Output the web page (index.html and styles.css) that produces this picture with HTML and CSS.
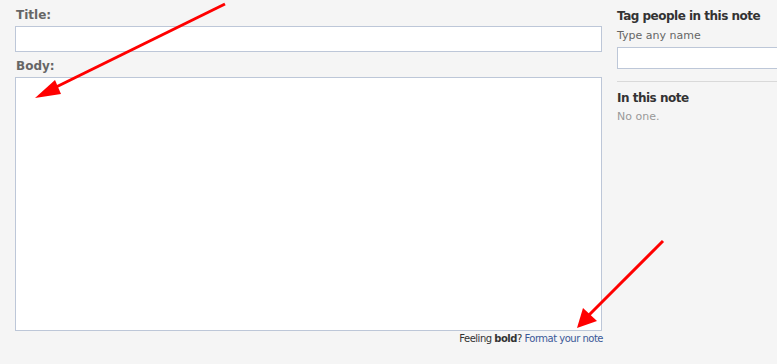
FILE: index.html
```html
<!DOCTYPE html>
<html lang="en">
<head>
    <meta charset="UTF-8">
    <title>Write a Note</title>
    <link rel="stylesheet" href="styles.css">
</head>
<body>
    <div class="page">
        <form class="note-form">
            <label class="field-label" for="title">Title:</label>
            <input type="text" id="title" class="title-input">

            <label class="field-label" for="body">Body:</label>
            <textarea id="body" class="body-input"></textarea>

            <div class="format-hint">Feeling <b>bold</b>? <a href="#">Format your note</a></div>
        </form>

        <div class="sidebar">
            <h3>Tag people in this note</h3>
            <div class="hint">Type any name</div>
            <input type="text" class="tag-input">
            <div class="divider"></div>
            <h3>In this note</h3>
            <div class="empty">No one.</div>
        </div>
    </div>

    <!-- annotation arrows -->
    <svg class="arrows" width="777" height="364" viewBox="0 0 777 364">
        <line x1="225" y1="4" x2="50" y2="90" stroke="#f00" stroke-width="3"/>
        <polygon points="35,98 55,80 61,94" fill="#f00"/>
        <line x1="663" y1="241" x2="588" y2="316" stroke="#f00" stroke-width="3"/>
        <polygon points="577,328 583,308 597,321" fill="#f00"/>
    </svg>
</body>
</html>
```

FILE: styles.css
```css
body {
    margin: 0;
    background-color: #f5f5f5;
    font-family: Tahoma, "DejaVu Sans", sans-serif;
    color: #333;
    overflow: hidden;
}

.page {
    display: flex;
    width: 777px;
    overflow: hidden;
}

.note-form {
    flex: none;
    width: 587px;
    padding: 7px 0 0 15px;
    display: flex;
    flex-direction: column;
}

.field-label {
    font-size: 12px;
    font-weight: bold;
    color: #666;
    line-height: 16px;
    padding-left: 1px;
    margin-bottom: 3px;
}

.title-input,
.body-input,
.tag-input {
    box-sizing: border-box;
    border: 1px solid #bdc7d8;
    background: #fff;
    margin: 0;
    padding: 3px;
    font-family: inherit;
    outline: none;
}

.title-input {
    height: 26px;
    margin-bottom: 6px;
}

.body-input {
    height: 254px;
    resize: none;
}

.format-hint {
    text-align: right;
    font-size: 10px;
    letter-spacing: -0.5px;
    line-height: 14px;
    margin-top: 1px;
    margin-right: -1px;
    color: #333;
}

.format-hint a {
    color: #3b5998;
    text-decoration: none;
}

.sidebar {
    flex: none;
    margin-left: 15px;
    width: 200px;
    padding-top: 8px;
}

.sidebar h3 {
    margin: 0;
    font-size: 12px;
    letter-spacing: -0.5px;
    line-height: 16px;
    color: #333;
}

.hint {
    font-size: 11px;
    line-height: 16px;
    color: #666;
    margin-top: 4px;
}

.tag-input {
    display: block;
    width: 200px;
    height: 22px;
    margin-top: 3px;
}

.divider {
    border-top: 1px solid #d9d9d9;
    margin: 12px 0 8px;
}

.empty {
    font-size: 11px;
    line-height: 16px;
    color: #999;
    margin-top: 3px;
}

.arrows {
    position: absolute;
    top: 0;
    left: 0;
}
```
